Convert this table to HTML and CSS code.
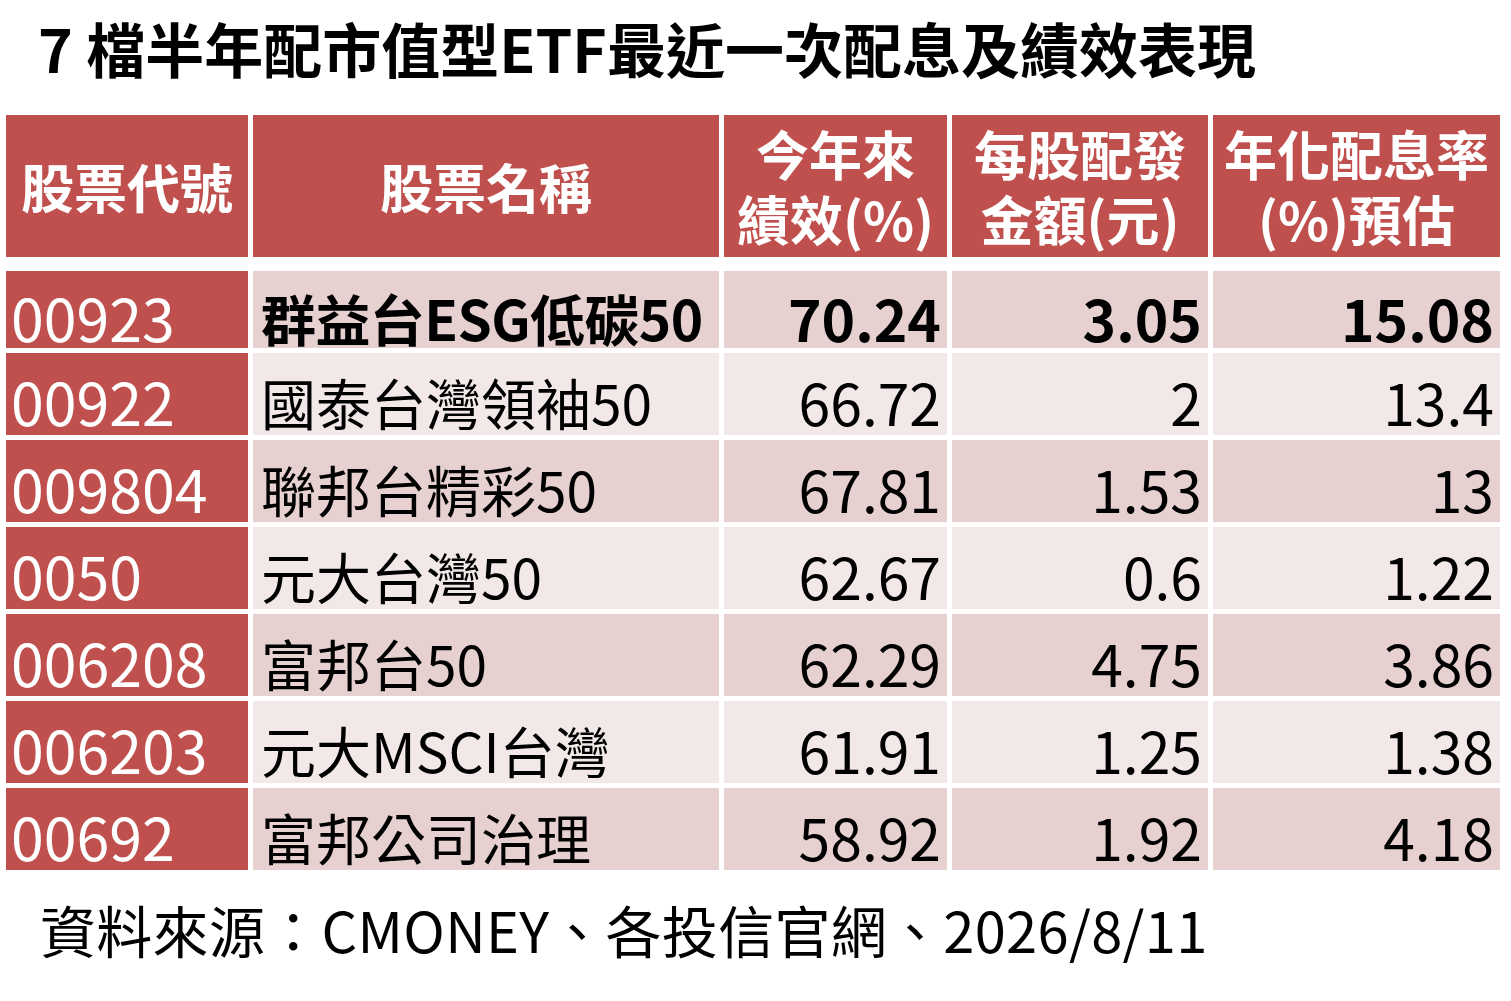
FILE: index.html
```html
<!DOCTYPE html>
<html lang="zh-Hant">
<head>
<meta charset="utf-8">
<title>7 檔半年配市值型ETF最近一次配息及績效表現</title>
<link rel="stylesheet" href="styles.css">
</head>
<body>
<div class="page">
  <h1 class="title">7 檔半年配市值型ETF最近一次配息及績效表現</h1>
  <div class="table">
    <div class="thead">
      <div class="th">股票代號</div>
      <div class="th">股票名稱</div>
      <div class="th"><span class="ln">今年來</span><span class="ln">績效(%)</span></div>
      <div class="th"><span class="ln">每股配發</span><span class="ln">金額(元)</span></div>
      <div class="th"><span class="ln">年化配息率</span><span class="ln">(%)預估</span></div>
    </div>
    <div class="tbody">
      <div class="tr dark first bold">
        <div class="td code">00923</div>
        <div class="td name">群益台ESG低碳50</div>
        <div class="td num">70.24</div>
        <div class="td num">3.05</div>
        <div class="td num">15.08</div>
      </div>
      <div class="tr light">
        <div class="td code">00922</div>
        <div class="td name">國泰台灣領袖50</div>
        <div class="td num">66.72</div>
        <div class="td num">2</div>
        <div class="td num">13.4</div>
      </div>
      <div class="tr dark">
        <div class="td code">009804</div>
        <div class="td name">聯邦台精彩50</div>
        <div class="td num">67.81</div>
        <div class="td num">1.53</div>
        <div class="td num">13</div>
      </div>
      <div class="tr light">
        <div class="td code">0050</div>
        <div class="td name">元大台灣50</div>
        <div class="td num">62.67</div>
        <div class="td num">0.6</div>
        <div class="td num">1.22</div>
      </div>
      <div class="tr dark">
        <div class="td code">006208</div>
        <div class="td name">富邦台50</div>
        <div class="td num">62.29</div>
        <div class="td num">4.75</div>
        <div class="td num">3.86</div>
      </div>
      <div class="tr light">
        <div class="td code">006203</div>
        <div class="td name">元大MSCI台灣</div>
        <div class="td num">61.91</div>
        <div class="td num">1.25</div>
        <div class="td num">1.38</div>
      </div>
      <div class="tr dark">
        <div class="td code">00692</div>
        <div class="td name">富邦公司治理</div>
        <div class="td num">58.92</div>
        <div class="td num">1.92</div>
        <div class="td num">4.18</div>
      </div>
    </div>
  </div>
  <p class="source">資料來源：CMONEY、各投信官網、2026/8/11</p>
</div>
</body>
</html>
```

FILE: styles.css
```css
html, body {
  margin: 0;
  padding: 0;
  background: #ffffff;
}

body {
  font-family: "Noto Sans CJK TC", "Noto Sans", sans-serif;
  color: #000000;
}

.page {
  width: 1511px;
  height: 1001px;
  overflow: hidden;
}

.title {
  margin: 0;
  padding: 10px 0 0 38px;
  height: 115px;
  box-sizing: border-box;
  font-size: 59px;
  line-height: 76px;
  font-weight: 700;
  white-space: nowrap;
}

.table {
  margin-left: 6px;
  width: 1493px;
}

.thead,
.tr {
  display: grid;
  grid-template-columns: 242px 466px 223px 256px 287px;
  column-gap: 5px;
}

.thead {
  height: 142px;
}

.th {
  background: #c0504d;
  color: #ffffff;
  font-weight: 700;
  font-size: 53px;
  line-height: 64px;
  display: flex;
  flex-direction: column;
  align-items: center;
  justify-content: center;
  text-align: center;
  padding-top: 0;
  box-sizing: border-box;
  white-space: nowrap;
}

.ln {
  display: block;
  height: 65px;
  line-height: 65px;
}

.tbody {
  margin-top: 14px;
  display: flex;
  flex-direction: column;
  gap: 5px;
}

.tr {
  height: 82px;
}

.tr.first {
  height: 77px;
}

.td {
  display: flex;
  align-items: center;
  font-size: 55px;
  line-height: 60px;
  padding-top: 14px;
  box-sizing: border-box;
  white-space: nowrap;
}

.tr.dark .td {
  background: #e6d0d0;
}

.tr.light .td {
  background: #f2e8e8;
}

.tr .td.code {
  background: #c0504d;
  color: #ffffff;
  padding-left: 5px;
  font-size: 59px;
  font-weight: 400;
}

.td.name {
  padding-left: 8px;
}

.td.num {
  justify-content: flex-end;
  padding-right: 6px;
  font-size: 57px;
}

.tr.bold .name,
.tr.bold .num {
  font-weight: 700;
}

.tr.bold .name {
  letter-spacing: -0.6px;
}

.source {
  margin: 0;
  padding: 24px 0 0 40px;
  font-size: 56px;
  line-height: 70px;
  letter-spacing: 0.3px;
  white-space: nowrap;
}
```
